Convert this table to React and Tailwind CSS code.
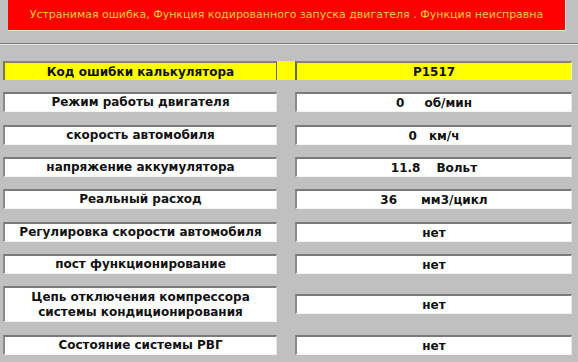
import React from 'react';

const rows = [
    { label: 'Режим работы двигателя', value: '0', unit: 'об/мин', gap: 'gap-[20px]', mt: 'mt-[12px]' },
    { label: 'скорость автомобиля', value: '0', unit: 'км/ч', gap: 'gap-[12px]', mt: 'mt-[13px]' },
    { label: 'напряжение аккумулятора', value: '11.8', unit: 'Вольт', gap: 'gap-[16px]', mt: 'mt-[12px]' },
    { label: 'Реальный расход', value: '36', unit: 'мм3/цикл', gap: 'gap-[24px]', mt: 'mt-[12px]' },
    { label: 'Регулировка скорости автомобиля', value: 'нет', mt: 'mt-[13px]' },
    { label: 'пост функционирование', value: 'нет', mt: 'mt-[12px]' },
    { label: ['Цепь отключения компрессора', 'системы кондиционирования'], value: 'нет', mt: 'mt-[12px]', tall: true },
    { label: 'Состояние системы РВГ', value: 'нет', mt: 'mt-[13px]' },
];

const boxCls = 'border-t-2 border-l-2 border-t-[#7a7a7a] border-l-[#8a8a8a] border-b border-r border-b-[#f4f4f4] border-r-[#e6e6e6]';

function Row({ row }) {
    return (
        <div className={`flex items-center ${row.mt}`}>
            <div className={`w-[274px] ${row.tall ? 'h-[36px]' : 'h-[20px]'} bg-white ${boxCls} flex flex-col items-center justify-center leading-[15px]`}>
                {Array.isArray(row.label)
                    ? row.label.map(l => <span key={l}>{l}</span>)
                    : <span>{row.label}</span>}
            </div>
            <div className="w-[18px]" />
            <div className={`w-[277px] h-[20px] bg-white ${boxCls} flex items-center justify-center ${row.gap || ''}`}>
                <span>{row.value}</span>
                {row.unit && <span>{row.unit}</span>}
            </div>
        </div>
    );
}

export default function App() {
    return (
        <div className="w-[578px] h-[362px] overflow-hidden bg-[#c0c0c0] font-['DejaVu_Sans',sans-serif]">
            {/* fault banner */}
            <div className="pl-[8px] pr-[12px]">
                <div className="h-[31px] bg-[#ff0000] border-r border-b border-[#e4e4e4] flex items-center justify-center text-[11px] text-[#ffcc33]">
                    Устранимая ошибка, Функция кодированного запуска двигателя . Функция неисправна
                </div>
            </div>

            <div className="mt-[12px] border-t border-t-[#7c7c7c] border-b border-b-[#e8e8e8]" />

            <div className="pl-[3px] pt-[16px] text-[12px] font-bold text-[#111]">
                {/* header row */}
                <div className="flex items-center w-[569px] h-[19px] bg-[#ffff00]">
                    <div className="w-[274px] h-[19px] border-t-2 border-l-2 border-t-[#8a8a4a] border-l-[#7a7a3a] border-r border-r-[#6a6a20] flex items-center justify-center">
                        Код ошибки калькулятора
                    </div>
                    <div className="w-[18px]" />
                    <div className="w-[277px] h-[19px] border-t-2 border-l-2 border-t-[#8a8a4a] border-l-[#6a6a20] border-r border-r-[#f4f4c0] flex items-center justify-center">
                        P1517
                    </div>
                </div>

                {rows.map((r, i) => <Row key={i} row={r} />)}
            </div>
        </div>
    );
}
